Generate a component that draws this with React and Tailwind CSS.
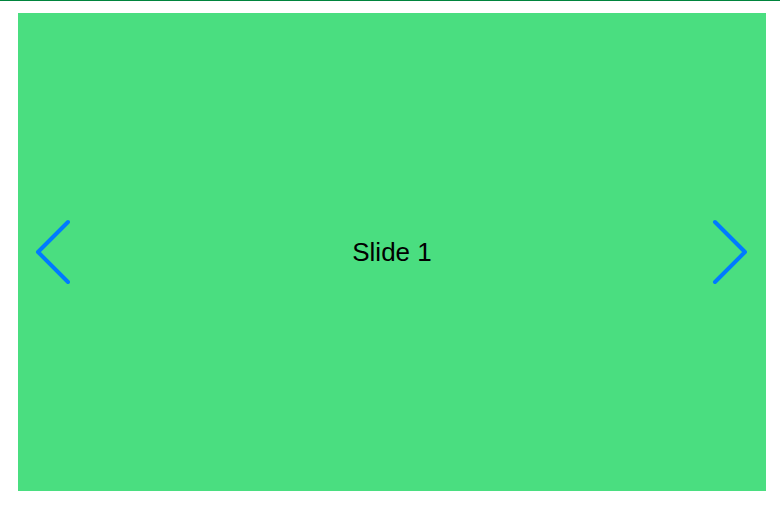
const Chevron = ({ dir }) => (
  <svg width="36" height="67" viewBox="0 0 36 67" fill="none" className="text-[#007aff]">
    {dir === "left" ? (
      <path d="M33 3.5 L3 33.5 L33 63.5" stroke="currentColor" strokeWidth="4" strokeLinecap="round" strokeLinejoin="round" />
    ) : (
      <path d="M3 3.5 L33 33.5 L3 63.5" stroke="currentColor" strokeWidth="4" strokeLinecap="round" strokeLinejoin="round" />
    )}
  </svg>
);

export default function App() {
  return (
    <div className="w-[780px] h-[507px] bg-white font-['Liberation_Sans',Arial,sans-serif]">
      <div className="h-px bg-[#00843d]" />
      <div className="pt-3 pl-[18px] pr-[14px]">
        <div className="relative h-[478px] bg-[#4ade80] flex items-center justify-center">
          <span className="text-[26px] text-black">Slide 1</span>
          <button className="absolute left-[17px] top-1/2 -translate-y-1/2 flex">
            <Chevron dir="left" />
          </button>
          <button className="absolute right-[18px] top-1/2 -translate-y-1/2 flex">
            <Chevron dir="right" />
          </button>
        </div>
      </div>
    </div>
  );
}
